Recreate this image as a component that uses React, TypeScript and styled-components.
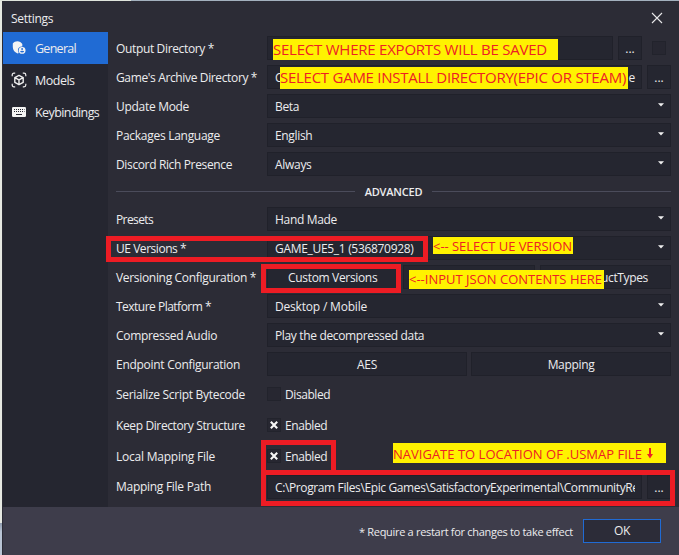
import React from "react";
import styled, { createGlobalStyle } from "styled-components";

const GlobalStyle = createGlobalStyle`
  * { box-sizing: border-box; }
  body { margin: 0; background: #e6e9e2; overflow: hidden; }
`;

const Desktop = styled.div`
  position: relative;
  width: 679px;
  height: 555px;
  padding: 1px 0 0 2px;
  background:
    linear-gradient(90deg, #dfe4dc 131px, #a3b1be 131px) 0 0 / 100% 1px no-repeat,
    linear-gradient(#e6e9e2 523px, #8f9cae 523px, #b9c4d4 532px) 0 0 / 2px 100% no-repeat;
  font: 12px/16px "Open Sans", "Noto Sans", sans-serif;
  color: #ececee;
`;

const Window = styled.div`
  display: flex;
  flex-direction: column;
  height: 554px;
  padding-left: 1px;
  background: #2c2c36;
`;

const TitleBar = styled.header`
  display: flex;
  justify-content: space-between;
  align-items: center;
  height: 31px;
  padding: 3px 16px 0 8px;
`;

const Txt = styled.span<{ $ls?: number }>`
  letter-spacing: ${(p) => p.$ls ?? -0.33}px;
  white-space: pre;
`;

const Label = styled(Txt)`
  padding-top: 2px;
`;

const Body = styled.div`
  display: flex;
  height: 475px;
`;

const Sidebar = styled.nav`
  width: 105px;
  background: #252630;
`;

const NavItem = styled.div<{ $active?: boolean }>`
  display: flex;
  align-items: center;
  gap: 8px;
  height: 32px;
  padding-left: 8px;
  font-size: 12.5px;
  background: ${(p) => (p.$active ? "#206bd4" : "transparent")};
  svg { display: block; flex: none; }
`;

const Content = styled.main`
  width: 563px;
  margin-left: 8px;
  padding-top: 4px;
`;

const Row = styled.div<{ $gap?: number }>`
  display: grid;
  grid-template-columns: 151px 404px;
  align-items: center;
  height: 24px;
  margin-bottom: ${(p) => p.$gap ?? 5}px;
`;

const Controls = styled.div<{ $cols?: string; $gap?: number }>`
  display: grid;
  grid-template-columns: ${(p) => p.$cols ?? "1fr"};
  gap: ${(p) => p.$gap ?? 5}px;
  align-items: center;
`;

const Field = styled.div`
  display: flex;
  align-items: center;
  justify-content: space-between;
  height: 24px;
  padding: 2px 6px 0 7px;
  border: 1px solid #20212a;
  background: #252630;
  overflow: hidden;
`;

const Clip = styled.div`
  flex: 1;
  overflow: hidden;
`;

const Button = styled(Field)<{ $right?: number }>`
  justify-content: ${(p) => (p.$right ? "flex-end" : "center")};
  padding: 1px ${(p) => p.$right ?? 0}px 0 0;
`;

const Box = styled.span`
  display: grid;
  place-items: center;
  justify-self: end;
  width: 14px;
  height: 14px;
  border: 1px solid #22232c;
  background: #272731;
`;

const CheckLine = styled.div`
  display: flex;
  align-items: center;
  gap: 4px;
`;

const Divider = styled.div`
  display: flex;
  align-items: center;
  gap: 10px;
  width: 555px;
  height: 21px;
  margin-bottom: 5px;
  font-size: 11px;
  font-weight: 600;
  &::before, &::after {
    content: "";
    flex: 1;
    height: 1px;
    background: #4b4c5b;
  }
`;

const Footer = styled.footer`
  display: flex;
  align-items: center;
  justify-content: flex-end;
  gap: 10px;
  height: 48px;
  padding: 0 18px 0 0;
  background: #3e3d4b;
  font-size: 11px;
`;

const OkButton = styled.div`
  display: grid;
  place-items: center;
  width: 78px;
  height: 24px;
  border: 1px solid #206bd4;
  background: #2c2c38;
  font-size: 12px;
`;

const Note = styled.div<{ $x: number; $y: number; $w: number; $h: number; $size: number; $ls: number; $dy?: number }>`
  position: absolute;
  left: ${(p) => p.$x}px;
  top: ${(p) => p.$y}px;
  width: ${(p) => p.$w}px;
  height: ${(p) => p.$h}px;
  background: #fff200;
  color: #ed2024;
  font-size: ${(p) => p.$size}px;
  line-height: ${(p) => p.$h + (p.$dy ?? 0) * 2}px;
  letter-spacing: ${(p) => p.$ls}px;
  white-space: pre;
  svg { position: absolute; right: 13px; top: 5px; }
`;

const Frame = styled.div<{ $x: number; $y: number; $w: number; $h: number }>`
  position: absolute;
  left: ${(p) => p.$x}px;
  top: ${(p) => p.$y}px;
  width: ${(p) => p.$w}px;
  height: ${(p) => p.$h}px;
  border: 5px solid #ed1c24;
`;

const ShieldIcon = () => (
  <svg width="16" height="16" viewBox="0 0 16 16">
    <path fill="#f4f4f4" d="M1.8 3.4C3 2 4.6 1.3 6.4 1.2 8.4 1.2 10.4 2.4 11.3 4v2.4C9 6.2 7 7.6 6.9 10c0 1.1.3 2 .9 2.9l-1.3.5C3.6 12.3 1.8 10 1.8 7z" />
    <circle cx="11.1" cy="10.4" r="3.4" fill="#f4f4f4" />
    <circle cx="11.1" cy="9" r=".9" fill="#206bd4" />
    <path fill="#206bd4" d="M9.1 11.7q0-1 2-1t2 1q-.7.8-2 .8t-2-.8z" />
  </svg>
);

const CubeIcon = () => (
  <svg width="16" height="16" viewBox="0 0 16 16" fill="none" stroke="#eee" strokeWidth="1.2">
    <path d="M1.2 4.2V3q0-1.8 1.8-1.8h1.2M11.8 1.2H13q1.8 0 1.8 1.8v1.2M14.8 11.8V13q0 1.8-1.8 1.8h-1.2M4.2 14.8H3q-1.8 0-1.8-1.8v-1.2" />
    <path strokeWidth="1.4" strokeLinejoin="round" d="m8 3.4 4.2 2.2v4.8L8 12.7l-4.2-2.3V5.6zM3.8 5.6 8 7.9l4.2-2.3M8 7.9v4.8" />
  </svg>
);

const KeyboardIcon = () => (
  <svg width="16" height="16" viewBox="0 0 16 16">
    <rect x="1" y="3" width="14" height="10" rx="1.2" fill="#f4f4f4" />
    <path stroke="#252630" strokeWidth="1" strokeDasharray="1 1" d="M3 5.5h10.5M3 7.5h10.5" />
    <path stroke="#252630" strokeWidth="1" d="M5 10.5h6" />
  </svg>
);

const CloseIcon = () => (
  <svg width="12" height="12" viewBox="0 0 12 12">
    <path d="m1 1 10 10M11 1 1 11" stroke="#e8e8ea" strokeWidth="1.1" />
  </svg>
);

const Arrow = () => (
  <svg width="6" height="4" viewBox="0 0 6 4">
    <path d="M0 .3h6L3 3.4z" fill="#f0f0f0" />
  </svg>
);

const Cross = () => (
  <svg width="8" height="8" viewBox="0 0 8 8">
    <path d="m.8.8 6.4 6.4M7.2.8.8 7.2" stroke="#f8f8f8" strokeWidth="2.1" />
  </svg>
);

const ArrowSlot = styled.span`
  display: flex;
  margin-top: -4px;
`;

const Select = ({ text, ls }: { text: string; ls?: number }) => (
  <Field>
    <Txt $ls={ls}>{text}</Txt>
    <ArrowSlot><Arrow /></ArrowSlot>
  </Field>
);

const Check = ({ on, text }: { on?: boolean; text: string }) => (
  <CheckLine>
    <Box>{on && <Cross />}</Box>
    <Label $ls={-0.42}>{text}</Label>
  </CheckLine>
);

const selects: [string, number, string, number][] = [
  ["Update Mode", -0.3, "Beta", -0.33],
  ["Packages Language", -0.28, "English", -0.33],
  ["Discord Rich Presence", -0.36, "Always", -0.3],
];

export default function App() {
  return (
    <>
      <GlobalStyle />
      <Desktop>
        <Window>
          <TitleBar>
            <Label $ls={-0.3}>Settings</Label>
            <CloseIcon />
          </TitleBar>
          <Body>
            <Sidebar>
              <NavItem $active><ShieldIcon /><Label $ls={-0.72}>General</Label></NavItem>
              <NavItem><CubeIcon /><Label $ls={-0.5}>Models</Label></NavItem>
              <NavItem><KeyboardIcon /><Label $ls={-0.58}>Keybindings</Label></NavItem>
            </Sidebar>
            <Content>
              <Row>
                <Label $ls={-0.35}>Output Directory *</Label>
                <Controls $cols="346px 24px 19px">
                  <Field />
                  <Button><Txt $ls={0}>...</Txt></Button>
                  <Box />
                </Controls>
              </Row>
              <Row>
                <Label $ls={-0.36}>Game's Archive Directory *</Label>
                <Controls $cols="375px 24px">
                  <Field><Txt>C</Txt><Txt>e</Txt></Field>
                  <Button><Txt $ls={0}>...</Txt></Button>
                </Controls>
              </Row>
              {selects.map(([label, ls, value, vls]) => (
                <Row key={label}>
                  <Label $ls={ls}>{label}</Label>
                  <Select text={value} ls={vls} />
                </Row>
              ))}
              <Divider><Txt $ls={-0.2}>ADVANCED</Txt></Divider>
              <Row><Label $ls={-0.6}>Presets</Label><Select text="Hand Made" ls={-0.32} /></Row>
              <Row><Label $ls={-0.46}>UE Versions *</Label><Select text="GAME_UE5_1 (536870928)" ls={-0.31} /></Row>
              <Row>
                <Label $ls={-0.32}>Versioning Configuration *</Label>
                <Controls $cols="1fr 1fr 1fr">
                  <Button><Txt>Custom Versions</Txt></Button>
                  <Button />
                  <Button $right={22}><Txt $ls={-0.36}>uctTypes</Txt></Button>
                </Controls>
              </Row>
              <Row><Label $ls={-0.51}>Texture Platform *</Label><Select text="Desktop / Mobile" ls={-0.19} /></Row>
              <Row><Label $ls={-0.31}>Compressed Audio</Label><Select text="Play the decompressed data" ls={-0.35} /></Row>
              <Row $gap={6}>
                <Label $ls={-0.28}>Endpoint Configuration</Label>
                <Controls $cols="1fr 1fr" $gap={4}>
                  <Button><Txt>AES</Txt></Button>
                  <Button><Txt>Mapping</Txt></Button>
                </Controls>
              </Row>
              <Row $gap={7}><Label $ls={-0.29}>Serialize Script Bytecode</Label><Check text="Disabled" /></Row>
              <Row $gap={7}><Label $ls={-0.38}>Keep Directory Structure</Label><Check on text="Enabled" /></Row>
              <Row $gap={7}><Label $ls={-0.23}>Local Mapping File</Label><Check on text="Enabled" /></Row>
              <Row>
                <Txt $ls={-0.28}>Mapping File Path</Txt>
                <Controls $cols="375px 24px">
                  <Field>
                    <Clip><Txt $ls={-0.38}>{"C:\\Program Files\\Epic Games\\SatisfactoryExperimental\\CommunityRe"}</Txt></Clip>
                  </Field>
                  <Button><Txt $ls={0}>...</Txt></Button>
                </Controls>
              </Row>
            </Content>
          </Body>
          <Footer>
            <Label $ls={-0.3}>* Require a restart for changes to take effect</Label>
            <OkButton><Txt>OK</Txt></OkButton>
          </Footer>
        </Window>

        <Note $x={273} $y={39} $w={285} $h={21} $size={15} $ls={-0.23}>SELECT WHERE EXPORTS WILL BE SAVED</Note>
        <Note $x={280} $y={67} $w={348} $h={22} $size={15} $ls={-0.26} $dy={-1}>SELECT GAME INSTALL DIRECTORY(EPIC OR STEAM)</Note>
        <Note $x={433} $y={237} $w={140} $h={17} $size={13} $ls={-0.05} $dy={1}>{"<-- SELECT UE VERSION"}</Note>
        <Note $x={409} $y={270} $w={195} $h={19} $size={13} $ls={0}>{"<--INPUT JSON CONTENTS HERE"}</Note>
        <Note $x={393} $y={443} $w={273} $h={20} $size={13} $ls={0.01} $dy={1}>
          NAVIGATE TO LOCATION OF .USMAP FILE
          <svg width="6" height="11" viewBox="0 0 6 11"><path d="M2 0h2v6h2L3 10.5 0 6h2z" fill="#ed2024" /></svg>
        </Note>
        <Frame $x={106} $y={236} $w={322} $h={26} />
        <Frame $x={261} $y={264} $w={140} $h={29} />
        <Frame $x={261} $y={440} $w={75} $h={35} />
        <Frame $x={261} $y={470} $w={414} $h={36} />
      </Desktop>
    </>
  );
}
